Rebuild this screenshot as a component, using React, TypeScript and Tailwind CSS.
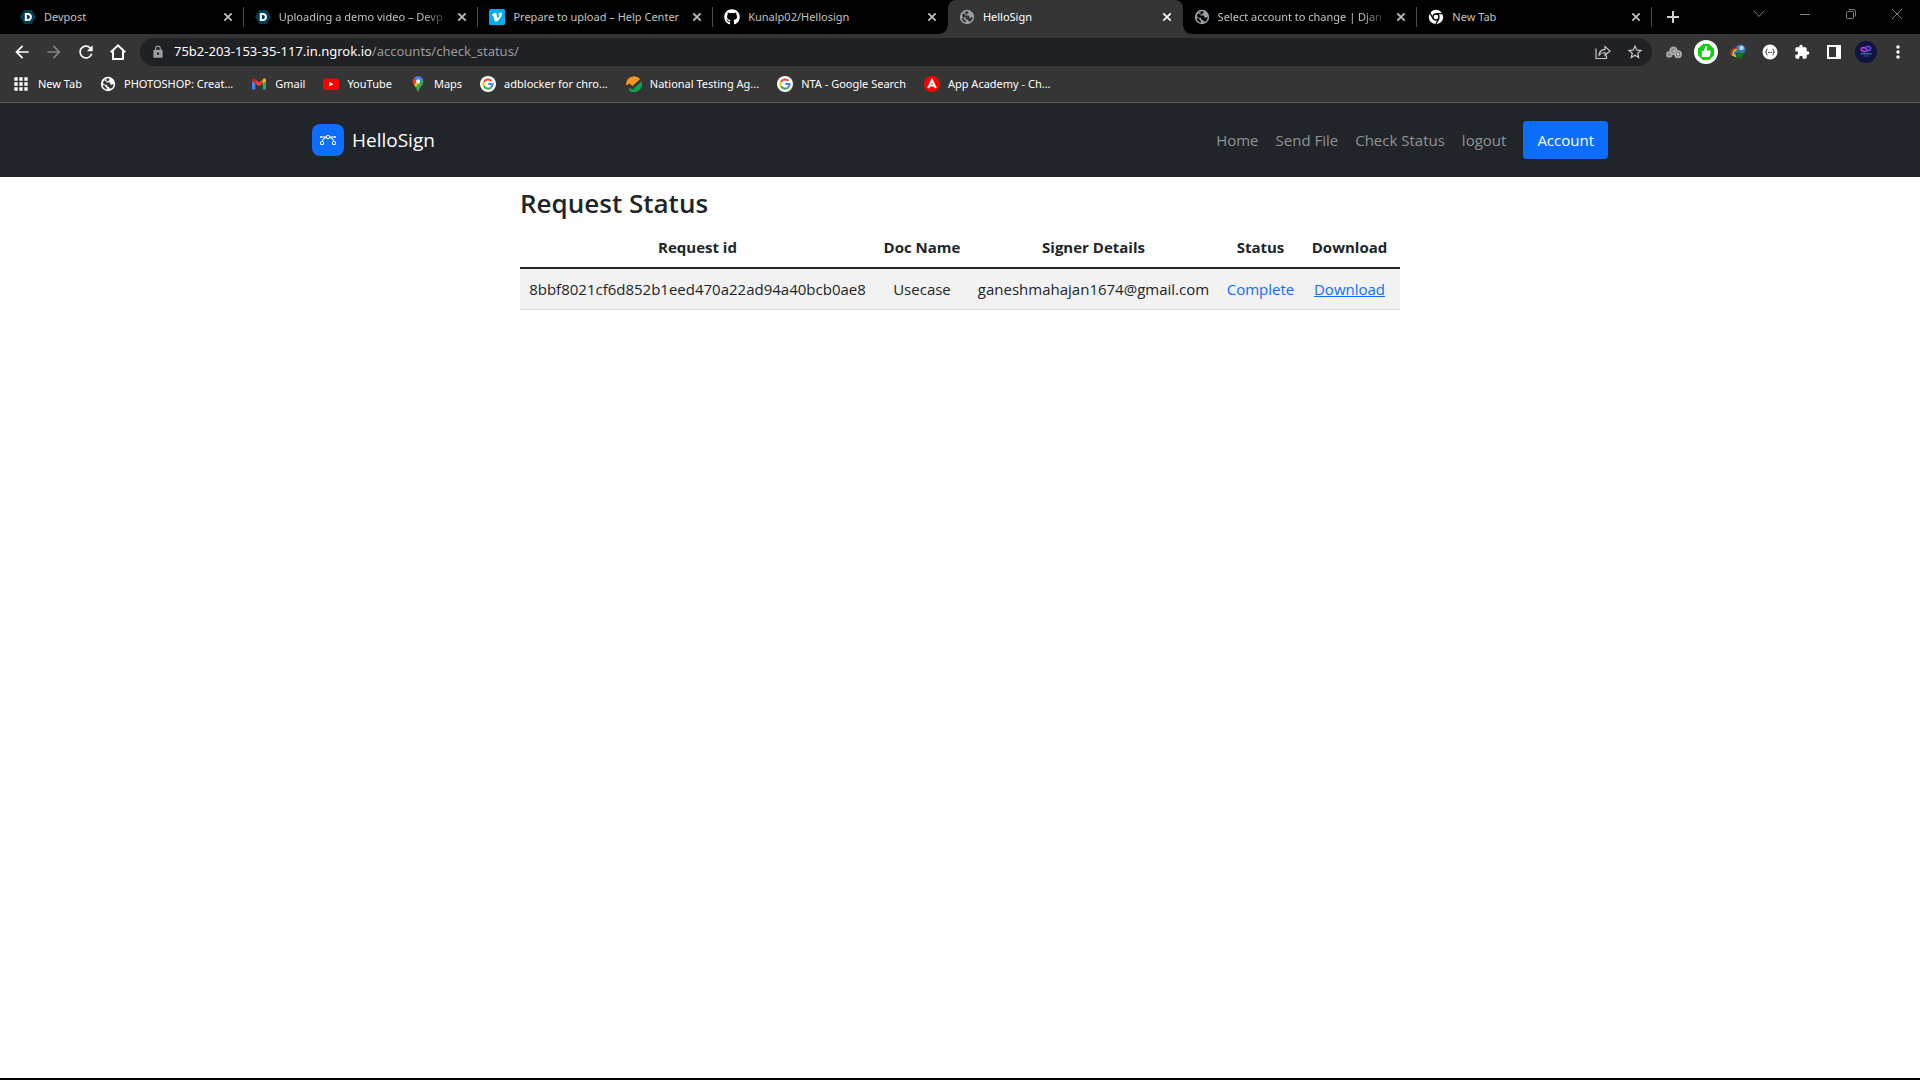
import React from "react";
import type { ReactNode } from "react";
import { FaGithub } from "react-icons/fa";
import {
  MdArrowBack,
  MdArrowForward,
  MdApps,
  MdExtension,
  MdLock,
  MdMoreVert,
  MdRefresh,
  MdStarBorder,
} from "react-icons/md";

void React;

function DevpostIcon() {
  return (
    <svg viewBox="0 0 16 16" className="h-4 w-4" aria-hidden="true">
      <path d="M4.2 1h7.6L16 8l-4.2 7H4.2L0 8z" fill="#003e54" />
      <path
        fillRule="evenodd"
        d="M4.8 4h3.1c2.4 0 4 1.6 4 4s-1.6 4-4 4H4.8zM6.9 5.9v4.2h1c1.2 0 2-.8 2-2.1s-.8-2.1-2-2.1z"
        fill="#fff"
      />
    </svg>
  );
}

function VimeoIcon() {
  return (
    <svg viewBox="0 0 16 16" className="h-4 w-4" aria-hidden="true">
      <rect width="16" height="16" rx="1.5" fill="#00adef" />
      <path
        d="M13 5.300c-.1 1.100-.8 2.600-2.300 4.400-1.500 1.900-2.800 2.900-3.800 2.900-.7 0-1.200-.6-1.600-1.800L4.400 7.500c-.3-1.100-.6-1.200-1.200-.8l-.5-.6C4 5 5.200 3.800 6 3.700c.9-.1 1.500.5 1.700 1.800.5 2.900.7 3.500 1.100 3.500.5 0 1.600-2 1.600-2.600.1-.8-.5-.8-1.100-.6.5-1.600 1.400-2.400 2.500-2.300.9 0 1.300.6 1.200 1.800z"
        fill="#fff"
      />
    </svg>
  );
}

function GlobeIcon({ land, sea }: { land: string; sea: string }) {
  return (
    <svg viewBox="0 0 16 16" className="h-4 w-4" aria-hidden="true">
      <circle cx="8" cy="8" r="7.2" fill={land} />
      <path
        d="M9 2.300l.5 1.500L8 5.200H6.300v1.400H9c.8 0 1.300.5 1.300 1.200v.9h1.500c.5 0 .9-.3 1.100-.7l.8.3c-.1 1.800-1 3.300-2.300 4.300l-1.900-.3-.6-1.400-1.900-.6V8.800H4.700L2.900 7.200l.2-1C3.900 3.900 6.200 2.200 9 2.300zM2.500 8.900l3 .8v1.400l1.400.8v1.500C4.600 13 2.900 11.300 2.500 8.900z"
        fill={sea}
      />
      <path d="M4.200 4.600l1.700-1.300 1.200.5-1.300 1.400z" fill={land} />
    </svg>
  );
}

function ChromeIcon() {
  return (
    <svg viewBox="0 0 16 16" className="h-4 w-4" aria-hidden="true">
      <circle cx="8" cy="8" r="7.2" fill="#fff" />
      <circle cx="8" cy="8" r="3" fill="none" stroke="#000" strokeWidth="1.3" />
      <path d="M8 4.700h6.500M5.100 9.600L1.900 4M10.900 9.600L7.700 15.200" stroke="#000" strokeWidth="1.3" />
    </svg>
  );
}

function GmailIcon() {
  return (
    <svg viewBox="0 0 16 16" className="h-4 w-4" aria-hidden="true">
      <path d="M1 4v8.500c0 .6.400 1 1 1h2.300V7z" fill="#4285f4" />
      <path d="M15 4v8.500c0 .6-.4 1-1 1h-2.300V7z" fill="#34a853" />
      <path d="M4.300 3.400L8 6.200l3.700-2.800v4L8 10.200 4.300 7.400z" fill="#ea4335" />
      <path d="M1 4c0-1.300 1.500-2 2.500-1.200l.8.600v4L1 5z" fill="#c5221f" />
      <path d="M15 4c0-1.300-1.500-2-2.500-1.200l-.8.600v4L15 5z" fill="#fbbc04" />
    </svg>
  );
}

function YouTubeIcon() {
  return (
    <svg viewBox="0 0 16 16" className="h-4 w-4" aria-hidden="true">
      <rect y="2.4" width="16" height="11.5" rx="2.6" fill="#f00" />
      <path d="M6.300 5.700v4.900L10.500 8.150z" fill="#fff" />
    </svg>
  );
}

function MapsIcon() {
  return (
    <svg viewBox="0 0 16 16" className="h-4 w-4" aria-hidden="true">
      <path d="M8 0.300c2.300 0 4.300 1.300 5 3.300L9.900 7 5 2.900 4 2.200C5 1 6.400.3 8 .3z" fill="#4285f4" />
      <path d="M4 2.200L7.300 5 4.100 8.700C3 7.300 2.600 6.400 2.600 5.200c0-1.200.5-2.200 1.400-3z" fill="#ea4335" />
      <path d="M4.100 8.700l5-5.900 1.100 4.500-4.500 4z" fill="#fbbc04" />
      <path d="M13 3.600c1 2.700-.2 4.800-1.900 6.700C9.800 12 9.400 13.300 8.700 15c-.3.900-1.100.9-1.400 0-.5-1.400-.8-2.500-1.700-3.700z" fill="#34a853" />
      <circle cx="8" cy="5.4" r="2" fill="#fff" />
    </svg>
  );
}

function GoogleIcon() {
  return (
    <svg viewBox="0 0 16 16" className="h-4 w-4" aria-hidden="true">
      <circle cx="8" cy="8" r="8" fill="#fff" />
      <g fill="none" strokeWidth="2">
        <path d="M11.400 4.900A4.600 4.600 0 0 0 4 5.800" stroke="#ea4335" />
        <path d="M4 5.800a4.600 4.600 0 0 0 0 4.500" stroke="#fbbc05" />
        <path d="M4 10.300a4.600 4.600 0 0 0 7 1.200" stroke="#34a853" />
        <path d="M11 11.500A4.600 4.600 0 0 0 12.600 8H8.200" stroke="#4285f4" />
      </g>
    </svg>
  );
}

function TestingIcon() {
  return (
    <svg viewBox="0 0 16 16" className="h-4 w-4" aria-hidden="true">
      <path d="M.3 9.500A8 8 0 0 1 14.200 3L6.500 9.900 3.600 7.400z" fill="#f7941e" />
      <path d="M6.600 13.400L15.500 5.200A8 8 0 0 1 2.600 13.900l1.200-2z" fill="#0d9f52" />
    </svg>
  );
}

function AppAcademyIcon() {
  return (
    <svg viewBox="0 0 16 16" className="h-4 w-4" aria-hidden="true">
      <circle cx="8" cy="8" r="8" fill="#f00" />
      <path d="M4.200 12L8 4.200l3.800 7.800M5.600 9.600h4.800" fill="none" stroke="#fff" strokeWidth="2" />
    </svg>
  );
}

function CloseIcon() {
  return (
    <svg viewBox="0 0 16 16" className="h-4 w-4" aria-hidden="true">
      <path d="M4.300 4.300l7.400 7.400M11.700 4.300l-7.400 7.400" stroke="currentColor" strokeWidth="1.7" />
    </svg>
  );
}

interface Tab {
  title: string;
  icon: ReactNode;
  active?: boolean;
  divider?: boolean;
  faded?: boolean;
}

const TABS: Tab[] = [
  { title: "Devpost", icon: <DevpostIcon />, divider: true },
  { title: "Uploading a demo video – Devp", icon: <DevpostIcon />, divider: true, faded: true },
  { title: "Prepare to upload – Help Center", icon: <VimeoIcon />, divider: true },
  { title: "Kunalp02/Hellosign", icon: <FaGithub className="h-4 w-4 text-white" /> },
  { title: "HelloSign", icon: <GlobeIcon land="#9aa0a6" sea="#353535" />, active: true },
  {
    title: "Select account to change | Djan",
    icon: <GlobeIcon land="#9aa0a6" sea="#000" />,
    divider: true,
    faded: true,
  },
  { title: "New Tab", icon: <ChromeIcon />, divider: true },
];

const BOOKMARKS: { title: string; icon: ReactNode }[] = [
  { title: "PHOTOSHOP: Creat...", icon: <GlobeIcon land="#fff" sea="#353535" /> },
  { title: "Gmail", icon: <GmailIcon /> },
  { title: "YouTube", icon: <YouTubeIcon /> },
  { title: "Maps", icon: <MapsIcon /> },
  { title: "adblocker for chro...", icon: <GoogleIcon /> },
  { title: "National Testing Ag...", icon: <TestingIcon /> },
  { title: "NTA - Google Search", icon: <GoogleIcon /> },
  { title: "App Academy - Ch...", icon: <AppAcademyIcon /> },
];

function TabStrip() {
  return (
    <div className="flex h-[34px] bg-black pl-[9px] text-[11px] text-[#c3c3c3]">
      <div className="flex min-w-0 flex-1">
        {TABS.map((tab) => (
          <div
            key={tab.title}
            className={`relative flex min-w-0 flex-1 items-center pr-2 pl-[11px] ${
              tab.active ? "rounded-t-lg bg-[#353535] text-white" : ""
            }`}
          >
            {tab.active && (
              <>
                <span className="absolute bottom-0 -left-2 h-2 w-2 bg-[radial-gradient(circle_at_top_left,#000_7px,#353535_8px)]" />
                <span className="absolute -right-2 bottom-0 h-2 w-2 bg-[radial-gradient(circle_at_top_right,#000_7px,#353535_8px)]" />
              </>
            )}
            <span className="shrink-0">{tab.icon}</span>
            <span
              className={`ml-2 min-w-0 flex-1 whitespace-nowrap ${tab.faded ? "mask-r-from-85%" : ""}`}
            >
              {tab.title}
            </span>
            <button type="button" aria-label={`Close ${tab.title}`} className="ml-1 shrink-0">
              <CloseIcon />
            </button>
            {tab.divider && <span className="absolute right-0 h-5 w-px bg-[#4a4a4a]" />}
          </div>
        ))}
      </div>
      <div className="flex w-[268px] shrink-0 items-center">
        <button type="button" aria-label="Open new tab" className="ml-[13px] text-[#d0d0d0]">
          <svg viewBox="0 0 16 16" className="h-4 w-4" aria-hidden="true">
            <path d="M8 2v12M2 8h12" stroke="currentColor" strokeWidth="2" />
          </svg>
        </button>
        <div className="ml-auto flex gap-[30px] pr-[15px] pb-1.5 text-[#808080]">
          <button type="button" aria-label="Search tabs">
            <svg viewBox="0 0 16 16" className="h-4 w-4" fill="none" aria-hidden="true">
              <path d="M3 5l5 5.500L13 5" stroke="currentColor" />
            </svg>
          </button>
          <button type="button" aria-label="Minimize">
            <svg viewBox="0 0 16 16" className="h-4 w-4" fill="none" aria-hidden="true">
              <path d="M3 8.500h10" stroke="currentColor" />
            </svg>
          </button>
          <button type="button" aria-label="Restore">
            <svg viewBox="0 0 16 16" className="h-4 w-4" fill="none" aria-hidden="true">
              <rect x="3.5" y="5.5" width="7" height="7" rx="1" stroke="currentColor" />
              <path d="M5.500 3.500h5a2 2 0 0 1 2 2v5" stroke="currentColor" />
            </svg>
          </button>
          <button type="button" aria-label="Close window">
            <svg viewBox="0 0 16 16" className="h-4 w-4" fill="none" aria-hidden="true">
              <path d="M3 3l10 10M13 3L3 13" stroke="currentColor" />
            </svg>
          </button>
        </div>
      </div>
    </div>
  );
}

function Toolbar() {
  return (
    <div className="flex items-center bg-[#353535] px-3 py-1 text-white">
      <div className="flex gap-3">
        <button type="button" aria-label="Back">
          <MdArrowBack className="h-5 w-5" />
        </button>
        <button type="button" aria-label="Forward" className="text-[#838383]">
          <MdArrowForward className="h-5 w-5" />
        </button>
        <button type="button" aria-label="Reload">
          <MdRefresh className="h-5 w-5" />
        </button>
        <button type="button" aria-label="Home page">
          <svg viewBox="0 0 20 20" className="h-5 w-5" fill="none" aria-hidden="true">
            <path d="M2.800 10.300L10 3.400l7.200 6.900M5 9v8h10V9" stroke="currentColor" strokeWidth="2" />
          </svg>
        </button>
      </div>
      <div className="ml-3 flex h-7 flex-1 items-center rounded-full bg-[#202124] pr-2 pl-[11px]">
        <MdLock className="h-3.5 w-3.5 text-[#9aa0a6]" />
        <a href="#" className="ml-[9px] text-[13px] text-[#9a9a9a]">
          <span className="text-white">75b2-203-153-35-117.in.ngrok.io</span>/accounts/check_status/
        </a>
        <div className="ml-auto flex items-center gap-[15px] text-[#c7c7c7]">
          <button type="button" aria-label="Share this page">
            <svg viewBox="0 0 16 16" className="h-4 w-4" fill="none" aria-hidden="true">
              <path
                d="M1 4.500v10h10.500v-3M4 11c.4-3.600 2.500-5.400 6-5.600V2.500l5 4.400-5 4.400V8.500C7.500 8.500 5.600 9.200 4 11z"
                stroke="currentColor"
                strokeWidth="1.2"
              />
            </svg>
          </button>
          <button type="button" aria-label="Bookmark this tab">
            <MdStarBorder className="h-[18px] w-[18px]" />
          </button>
        </div>
      </div>
      <div className="ml-3.5 flex items-center">
        <button type="button" aria-label="Cloud extension">
          <svg viewBox="0 0 16 16" className="h-4 w-4" fill="none" aria-hidden="true">
            <path d="M4 11l4-5 4 5z" fill="#8a8a8a" />
            <g stroke="#a9a9a9" strokeWidth="2">
              <circle cx="3.3" cy="10.5" r="2.2" fill="#777" />
              <circle cx="7.5" cy="6.8" r="3.2" fill="#777" />
              <circle cx="12" cy="10.3" r="3" fill="#555" />
            </g>
            <circle cx="12" cy="10.3" r="1.2" fill="#ddd" />
            <circle cx="7.8" cy="6.8" r="1.2" fill="#c4c4c4" />
          </svg>
        </button>
        <button type="button" aria-label="Thumbs up extension" className="ml-3">
          <svg viewBox="0 0 24 24" className="h-6 w-6" aria-hidden="true">
            <circle cx="12" cy="12" r="12" fill="#fff" />
            <path d="M8.800 4h6.400L20 8.800v6.400L15.200 20H8.800L4 15.200V8.800z" fill="#10cf10" />
            <path
              d="M7.800 11h1.900l2-5c1.300-.2 1.900.7 1.500 2.200l-.5 2.300h3.200c.7 0 1 .5.9 1.100l-1 4.500c-.2.700-.6.900-1.200.9H7.800z"
              fill="#fff"
            />
          </svg>
        </button>
        <button type="button" aria-label="Download manager extension" className="ml-3">
          <svg viewBox="0 0 16 16" className="h-4 w-4" aria-hidden="true">
            <circle cx="10.5" cy="5.5" r="5" fill="#3b74c4" />
            <circle cx="11.5" cy="4" r="2.3" fill="#b9d3f0" />
            <g fill="none" strokeWidth="1.7">
              <path d="M6.500 4C2.500 4 .5 8 1.500 11" stroke="#d82a1c" />
              <path d="M6.700 5.700C4 6 2.500 8.500 3.200 11.500" stroke="#f4c20d" />
              <path d="M7 7.400C5.200 8 4.500 9.500 5 12.500" stroke="#1a8ad6" />
            </g>
            <path d="M1 11l6 3-1.500-3.500z" fill="#e6b422" />
            <path d="M7.500 8l8.500.8-3.200 1.700-2 5.500-1.300-3.300-3.800.7z" fill="#0c7a1c" />
          </svg>
        </button>
        <button type="button" aria-label="Code extension" className="ml-4">
          <svg viewBox="0 0 16 16" className="h-4 w-4" fill="none" aria-hidden="true">
            <circle cx="8" cy="8" r="7.5" fill="#fff" />
            <path
              d="M5.500 5c-1.200 0-.9 1-1 1.900 0 .7-.4 1.100-1 1.100.6 0 1 .4 1 1.100.1.900-.2 1.900 1 1.900M10.500 5c1.200 0 .9 1 1 1.900 0 .7.400 1.100 1 1.100-.6 0-1 .4-1 1.100-.1.900.2 1.900-1 1.900"
              stroke="#333"
            />
            <path d="M6 8.500h4" stroke="#333" strokeDasharray="1 .5" />
          </svg>
        </button>
        <button type="button" aria-label="Extensions" className="ml-4">
          <MdExtension className="h-4 w-4" />
        </button>
        <button type="button" aria-label="Side panel" className="ml-4">
          <svg viewBox="0 0 16 16" className="h-4 w-4" aria-hidden="true">
            <path fillRule="evenodd" d="M1 1h14v14H1zM3 3v10h7V3z" fill="#fff" />
          </svg>
        </button>
        <button type="button" aria-label="Profile" className="ml-[13px]">
          <svg viewBox="0 0 22 22" className="h-[22px] w-[22px]" fill="none" aria-hidden="true">
            <circle cx="11" cy="11" r="11" fill="#101440" />
            <path d="M12 9.800C9 11.500 5.500 10 6.300 7.800c.7-1.700 3.200-1.600 4.400-.4l2 1.900" stroke="#c03df0" strokeWidth="1.4" />
            <path d="M10.500 6.500c2.500-1.800 5.600-.8 5.200 1.300-.3 1.400-1.900 2.200-3.400 1.500" stroke="#6a4df5" strokeWidth="1.4" />
            <path d="M5.500 12.800h11" stroke="#3c8fd8" />
            <path d="M8.500 15h5" stroke="#51558a" strokeWidth=".7" />
          </svg>
        </button>
        <button type="button" aria-label="Menu" className="ml-[11px]">
          <MdMoreVert className="h-5 w-5" />
        </button>
      </div>
    </div>
  );
}

function BookmarksBar() {
  return (
    <nav
      aria-label="Bookmarks"
      className="flex h-[33px] items-center gap-[18px] border-b border-[#5f5f5f] bg-[#353535] pb-1 pl-[11px] text-[11px] text-white"
    >
      <a href="#" className="flex items-center gap-[7px]">
        <MdApps className="h-5 w-5" />
        New Tab
      </a>
      {BOOKMARKS.map((bookmark) => (
        <a href="#" key={bookmark.title} className="flex items-center gap-2 whitespace-nowrap">
          {bookmark.icon}
          {bookmark.title}
        </a>
      ))}
    </nav>
  );
}

function SiteNav() {
  return (
    <header className="bg-[#212529]">
      <div className="mx-auto flex max-w-[1320px] items-center justify-between px-3 py-[18px]">
        <a href="#" className="flex items-center gap-2 text-[19px] text-white">
          <span className="flex h-8 w-8 items-center justify-center rounded-lg bg-[#0d6efd]">
            <svg viewBox="0 0 16 16" className="h-4 w-4" fill="currentColor" aria-hidden="true">
              <path
                fillRule="evenodd"
                d="M0 10.500A1.500 1.500 0 0 1 1.500 9h1A1.500 1.500 0 0 1 4 10.500v1A1.500 1.500 0 0 1 2.500 13h-1A1.500 1.500 0 0 1 0 11.500v-1zm1.500-.5a.5.5 0 0 0-.5.5v1a.5.5 0 0 0 .5.5h1a.5.5 0 0 0 .5-.5v-1a.5.5 0 0 0-.5-.5h-1zm10.500.500A1.500 1.500 0 0 1 13.500 9h1a1.500 1.500 0 0 1 1.500 1.500v1a1.500 1.500 0 0 1-1.500 1.500h-1a1.500 1.500 0 0 1-1.500-1.500v-1zm1.500-.5a.5.5 0 0 0-.5.5v1a.5.5 0 0 0 .5.5h1a.5.5 0 0 0 .5-.5v-1a.5.5 0 0 0-.5-.5h-1zM6 4.500A1.500 1.500 0 0 1 7.500 3h1A1.500 1.500 0 0 1 10 4.500v1A1.500 1.500 0 0 1 8.500 7h-1A1.500 1.500 0 0 1 6 5.500v-1zM7.500 4a.5.5 0 0 0-.5.5v1a.5.5 0 0 0 .5.5h1a.5.5 0 0 0 .5-.5v-1a.5.5 0 0 0-.5-.5h-1z"
              />
              <path d="M6 4.500H1.866a1 1 0 1 0 0 1h2.668A6.517 6.517 0 0 0 1.814 9H2.500c.123 0 .244.015.358.043a5.517 5.517 0 0 1 3.185-3.185A1.503 1.503 0 0 1 6 5.500v-1zm3.957 1.358A1.500 1.500 0 0 0 10 5.500v-1h4.134a1 1 0 1 1 0 1h-2.668a6.517 6.517 0 0 1 2.720 3.500H13.500c-.123 0-.243.015-.358.043a5.517 5.517 0 0 0-3.185-3.185z" />
            </svg>
          </span>
          HelloSign
        </a>
        <nav aria-label="Main" className="flex items-center gap-[17px] text-[15px] text-[#909294]">
          <a href="#">Home</a>
          <a href="#">Send File</a>
          <a href="#">Check Status</a>
          <a href="#">logout</a>
          <button type="button" className="h-[38px] rounded bg-[#0d6efd] px-3.5 text-white">
            Account
          </button>
        </nav>
      </div>
    </header>
  );
}

function RequestStatus() {
  return (
    <main className="mx-auto w-full max-w-[880px] pt-2 text-[#212529]">
      <h1 className="text-[26px] leading-9 font-semibold">Request Status</h1>
      <table className="mt-1.5 w-full text-center text-[15px] leading-6">
        <colgroup>
          <col className="w-[355px]" />
          <col className="w-[94px]" />
          <col className="w-[249px]" />
          <col className="w-[85px]" />
          <col />
        </colgroup>
        <thead>
          <tr className="border-b-2 border-[#212529]">
            <th className="p-2">Request id</th>
            <th className="p-2">Doc Name</th>
            <th className="p-2">Signer Details</th>
            <th className="p-2">Status</th>
            <th className="py-2 pr-3 pl-2">Download</th>
          </tr>
        </thead>
        <tbody>
          <tr className="border-b border-[#dee2e6] bg-[#f2f2f2]">
            <td className="p-2">8bbf8021cf6d852b1eed470a22ad94a40bcb0ae8</td>
            <td className="p-2">Usecase</td>
            <td className="p-2">ganeshmahajan1674@gmail.com</td>
            <td className="p-2 text-[#0d6efd]">Complete</td>
            <td className="py-2 pr-3 pl-2">
              <a href="#" className="text-[#0d6efd] underline">
                Download
              </a>
            </td>
          </tr>
        </tbody>
      </table>
    </main>
  );
}

export default function App() {
  return (
    <div className="flex min-h-screen flex-col border-b-2 border-black bg-white font-['Open_Sans','Noto_Sans',sans-serif]">
      <div className="font-['Noto_Sans','Open_Sans',sans-serif]">
        <TabStrip />
        <Toolbar />
        <BookmarksBar />
      </div>
      <SiteNav />
      <RequestStatus />
    </div>
  );
}
